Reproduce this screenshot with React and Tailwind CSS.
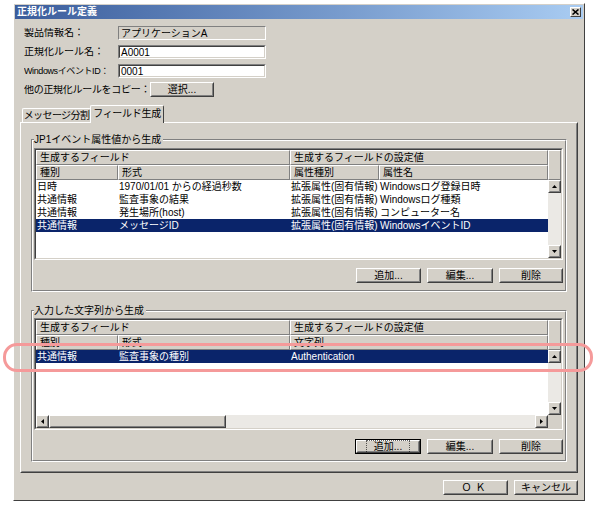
import React from "react";

// classic 3D edges
const raised = "border border-white border-r-[#404040] border-b-[#404040]";
const raisedInner = "border border-transparent border-r-[#808080] border-b-[#808080]";

function Btn({ className = "", focus, children }) {
  return (
    <div className={`h-[15px] shrink-0 bg-[#d4d0c8] ${focus ? "border border-black" : ""} ${className}`}>
      <div className={`w-full h-full ${raised}`}>
        <div className={`w-full h-full ${raisedInner} flex items-center justify-center whitespace-nowrap`}>
          <span className={focus ? "outline outline-1 outline-dotted outline-black/60 outline-offset-[1px] px-[6px]" : ""}>{children}</span>
        </div>
      </div>
    </div>
  );
}

function Arrow({ dir }) {
  const v = dir === "up" || dir === "down";
  const pts = {
    up: "0,3 2.5,0 5,3",
    down: "0,0 5,0 2.5,3",
    left: "3,0 3,5 0,2.5",
    right: "0,0 0,5 3,2.5",
  }[dir];
  return (
    <svg width={v ? 5 : 3} height={v ? 3 : 5} viewBox={v ? "0 0 5 3" : "0 0 3 5"}>
      <polygon points={pts} fill="#000" />
    </svg>
  );
}

function ArrowBtn({ dir, className = "" }) {
  return (
    <div className={`w-[13px] h-[13px] shrink-0 bg-[#d4d0c8] ${raised} ${className}`}>
      <div className={`w-full h-full ${raisedInner} flex items-center justify-center`}>
        <Arrow dir={dir} />
      </div>
    </div>
  );
}

function Head({ className = "", children }) {
  return (
    <div className={`h-[15px] shrink-0 bg-[#d4d0c8] border border-white border-r-[#808080] border-b-[#808080] pl-[3px] leading-[13px] whitespace-nowrap overflow-hidden ${className}`}>
      {children}
    </div>
  );
}

function Row({ cells, selected }) {
  return (
    <div className={`flex h-[13px] leading-[13px] whitespace-nowrap ${selected ? "bg-[#0a246a] text-white" : ""}`}>
      {cells.map((c, i) => (
        <div key={i} className={`pl-px overflow-hidden ${c.w}`}>{c.t}</div>
      ))}
    </div>
  );
}

function Sunken({ className = "", children }) {
  return (
    <div className={`border border-[#808080] border-r-white border-b-white ${className}`}>
      <div className="w-full h-full border border-[#404040] border-r-[#d4d0c8] border-b-[#d4d0c8] flex">{children}</div>
    </div>
  );
}

function Group({ label, className = "", children }) {
  return (
    <div className={`relative w-[536px] border border-[#808080] border-r-white border-b-white ${className}`}>
      <div className="absolute inset-0 border border-white border-r-[#808080] border-b-[#808080] pointer-events-none" />
      <div className="absolute -top-[6px] left-[2px] bg-[#d4d0c8] pr-[2px] leading-[11px]">{label}</div>
      {children}
    </div>
  );
}

const jp1Rows = [
  ["日時", "1970/01/01 からの経過秒数", "拡張属性(固有情報)", "Windowsログ登録日時"],
  ["共通情報", "監査事象の結果", "拡張属性(固有情報)", "Windowsログ種類"],
  ["共通情報", "発生場所(host)", "拡張属性(固有情報)", "コンピューター名"],
  ["共通情報", "メッセージID", "拡張属性(固有情報)", "WindowsイベントID"],
];

function FormRow({ label, labelW = "w-[94px]", labelClass = "", children }) {
  return (
    <div className="flex items-center">
      <div className={`${labelW} shrink-0 whitespace-nowrap overflow-hidden ${labelClass}`}>{label}</div>
      {children}
    </div>
  );
}

function Input({ value, disabled }) {
  return (
    <div className={`w-[148px] h-[14px] border border-[#808080] border-r-white border-b-white ${disabled ? "bg-[#d4d0c8]" : "bg-white"}`}>
      <div className={`w-full h-full border ${disabled ? "border-transparent" : "border-[#404040] border-r-[#d4d0c8] border-b-[#d4d0c8]"} pl-px leading-[11px]`}>
        {value}
      </div>
    </div>
  );
}

export default function App() {
  return (
    <div className="relative w-[596px] h-[505px] bg-white overflow-hidden text-[10px] leading-none text-black font-['Liberation_Sans','Noto_Sans_CJK_JP',sans-serif]">
      <div className={`ml-[13px] mt-[3px] w-[572px] h-[498px] bg-[#d4d0c8] ${raised} p-px flex flex-col`}>
        {/* title bar */}
        <div className="h-[14px] shrink-0 bg-linear-to-r from-[#3b5d9c] to-[#a9ccf2] flex items-center justify-between pl-[2px] pr-[2px]">
          <span className="text-white font-bold text-[10px]">正規化ルール定義</span>
          <div className={`w-[11px] h-[10px] bg-[#d4d0c8] ${raised} flex items-center justify-center`}>
            <svg width="7" height="6" viewBox="0 0 7 6">
              <path d="M0.5 0.5 L6.5 5.5 M6.5 0.5 L0.5 5.5" stroke="#000" strokeWidth="1.6" />
            </svg>
          </div>
        </div>

        {/* form */}
        <div className="pl-[9px] pt-[7px] flex flex-col gap-[5px]">
          <FormRow label="製品情報名：">
            <Input value="アプリケーションA" disabled />
          </FormRow>
          <FormRow label="正規化ルール名：">
            <Input value="A0001" />
          </FormRow>
          <FormRow label="WindowsイベントID：" labelClass="text-[9px] tracking-[-0.4px]">
            <Input value="0001" />
          </FormRow>
          <FormRow label="他の正規化ルールをコピー：" labelW="w-[126px]" labelClass="tracking-[-0.3px]">
            <Btn className="w-[64px] -mt-px">選択...</Btn>
          </FormRow>
        </div>

        {/* tabs */}
        <div className="ml-[5px] mt-[8px] flex flex-col">
          <div className="flex items-end h-[17px] pl-[2px]">
            <div className="h-[14px] w-[69px] border border-white border-r-[#404040] border-b-0 rounded-tl-[2px] rounded-tr-[2px] flex items-center justify-center whitespace-nowrap tracking-[-0.6px]">
              メッセージ分割
            </div>
            <div className="relative z-10 -mb-px -ml-px h-[18px] w-[74px] bg-[#d4d0c8] border border-white border-r-[#404040] border-b-0 rounded-tl-[2px] rounded-tr-[2px] flex items-center justify-center pb-[2px] whitespace-nowrap tracking-[-0.3px]">
              フィールド生成
            </div>
          </div>
          <div className="w-[558px] h-[351px] border border-white border-r-[#404040] border-b-[#404040]">
            <div className="w-full h-full border border-transparent border-r-[#808080] border-b-[#808080] pl-[9px] pt-[15px]">
              {/* group 1 */}
              <Group label="JP1イベント属性値から生成" className="pt-[8px] pb-[8px] pl-[2px] pr-[3px]">
                <Sunken className="w-[529px] h-[112px] bg-white">
                  <div className="w-[512px] flex flex-col">
                    <div className="flex">
                      <Head className="w-[254px]">生成するフィールド</Head>
                      <Head className="w-[258px]">生成するフィールドの設定値</Head>
                    </div>
                    <div className="flex">
                      <Head className="w-[82px]">種別</Head>
                      <Head className="w-[172px]">形式</Head>
                      <Head className="w-[89px]">属性種別</Head>
                      <Head className="w-[169px]">属性名</Head>
                    </div>
                    <div className="bg-white flex-1">
                      {jp1Rows.map((r, i) => (
                        <Row
                          key={i}
                          selected={i === 3}
                          cells={[
                            { w: "w-[82px]", t: r[0] },
                            { w: "w-[172px]", t: r[1] },
                            { w: "w-[89px]", t: r[2] },
                            { w: "w-[169px]", t: r[3] },
                          ]}
                        />
                      ))}
                    </div>
                  </div>
                  <div className="w-[13px] flex flex-col">
                    <Head className="w-[13px] h-[30px]" />
                    <ArrowBtn dir="up" />
                    <div className="flex-1 bg-[#ebe9e5]" />
                    <ArrowBtn dir="down" />
                  </div>
                </Sunken>
                <div className="flex justify-end gap-[6px] mt-[8px]">
                  <Btn className="w-[65px]">追加...</Btn>
                  <Btn className="w-[66px]">編集...</Btn>
                  <Btn className="w-[64px]">削除</Btn>
                </div>
              </Group>

              {/* group 2 */}
              <Group label="入力した文字列から生成" className="mt-[18px] pt-[7px] pb-[7px] pl-[2px] pr-[3px]">
                <Sunken className="w-[529px] h-[112px] bg-white">
                  <div className="w-[512px] flex flex-col">
                    <div className="flex">
                      <Head className="w-[254px]">生成するフィールド</Head>
                      <Head className="w-[258px]">生成するフィールドの設定値</Head>
                    </div>
                    <div className="flex">
                      <Head className="w-[82px]">種別</Head>
                      <Head className="w-[172px]">形式</Head>
                      <Head className="w-[258px]">文字列</Head>
                    </div>
                    <div className="bg-white flex-1">
                      <Row
                        selected
                        cells={[
                          { w: "w-[82px]", t: "共通情報" },
                          { w: "w-[172px]", t: "監査事象の種別" },
                          { w: "w-[258px]", t: "Authentication" },
                        ]}
                      />
                    </div>
                    <div className="flex h-[13px]">
                      <ArrowBtn dir="left" />
                      <div className={`w-[177px] h-[13px] bg-[#d4d0c8] ${raised}`}>
                        <div className={`w-full h-full ${raisedInner}`} />
                      </div>
                      <div className="flex-1 bg-[#ebe9e5]" />
                      <ArrowBtn dir="right" />
                    </div>
                  </div>
                  <div className="w-[13px] flex flex-col">
                    <Head className="w-[13px] h-[30px]" />
                    <ArrowBtn dir="up" />
                    <div className="flex-1 bg-[#ebe9e5]" />
                    <ArrowBtn dir="down" />
                    <div className="h-[13px] bg-[#d4d0c8]" />
                  </div>
                </Sunken>
                <div className="flex justify-end gap-[6px] mt-[9px]">
                  <Btn className="w-[66px]" focus>追加...</Btn>
                  <Btn className="w-[66px]">編集...</Btn>
                  <Btn className="w-[64px]">削除</Btn>
                </div>
              </Group>
            </div>
          </div>
        </div>

        {/* dialog buttons */}
        <div className="ml-[5px] w-[558px] mt-[7px] flex justify-end gap-[6px]">
          <Btn className="w-[65px]">
            <span className="tracking-[4px]">ＯＫ</span>
          </Btn>
          <Btn className="w-[64px]">キャンセル</Btn>
        </div>
      </div>

      {/* annotation highlight */}
      <div className="absolute left-[3px] top-[343px] w-[590px] h-[29px] border-[3px] border-[#f59a9a] rounded-[14px] pointer-events-none" />
    </div>
  );
}
